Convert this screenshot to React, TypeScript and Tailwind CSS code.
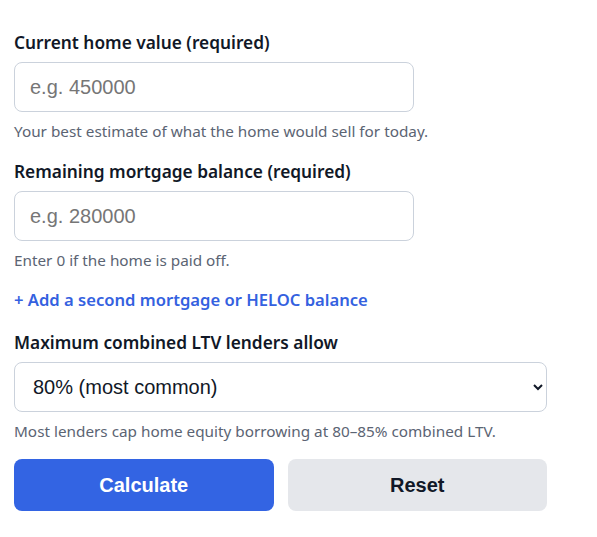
import React from 'react';

const labelCls = "block text-[17.3px] font-semibold text-[#111827] leading-6 mb-[7px]";
const inputCls =
  "block w-[400px] h-[50px] rounded-lg border border-[#cbd2dc] bg-white px-[15px] text-[20px] text-[#111827] placeholder:text-[#767676] font-['Liberation_Sans',Arial,sans-serif] outline-none";
const hintCls = "mt-[9px] text-[15.3px] leading-5 text-[#5b6473]";

const App = () => {
  return (
    <div className="min-h-screen bg-white px-[14px] pt-[31px] font-['Noto_Sans',sans-serif]">
      <div className="w-[533px]">
        <div>
          <label className={labelCls}>Current home value (required)</label>
          <input className={inputCls} placeholder="e.g. 450000" inputMode="numeric"/>
          <p className={hintCls}>Your best estimate of what the home would sell for today.</p>
        </div>
        <div className="mt-[19px]">
          <label className={labelCls}>Remaining mortgage balance (required)</label>
          <input className={inputCls} placeholder="e.g. 280000" inputMode="numeric"/>
          <p className={hintCls}>Enter 0 if the home is paid off.</p>
        </div>
        <button className="mt-[18px] block text-[16.6px] font-semibold leading-6 text-[#3461e0]">
          + Add a second mortgage or HELOC balance
        </button>
        <div className="mt-[19px]">
          <label className={labelCls}>Maximum combined LTV lenders allow</label>
          <select
            defaultValue="80"
            className="block w-full h-[50px] rounded-lg border border-[#cbd2dc] bg-white pl-[14px] pr-2 text-[20px] text-[#111827] font-['Liberation_Sans',Arial,sans-serif]">
            <option value="80">80% (most common)</option>
            <option value="85">85%</option>
            <option value="90">90%</option>
          </select>
          <p className={hintCls}>Most lenders cap home equity borrowing at 80–85% combined LTV.</p>
        </div>
        <div className="mt-[18px] flex gap-[14px] font-['Liberation_Sans',Arial,sans-serif]">
          <button className="flex-1 h-[52px] rounded-lg bg-[#3364e3] text-[20px] font-bold text-white">
            Calculate
          </button>
          <button className="flex-1 h-[52px] rounded-lg bg-[#e5e7eb] text-[20px] font-bold text-[#111827]">
            Reset
          </button>
        </div>
      </div>
    </div>
  );
};

export default App;
